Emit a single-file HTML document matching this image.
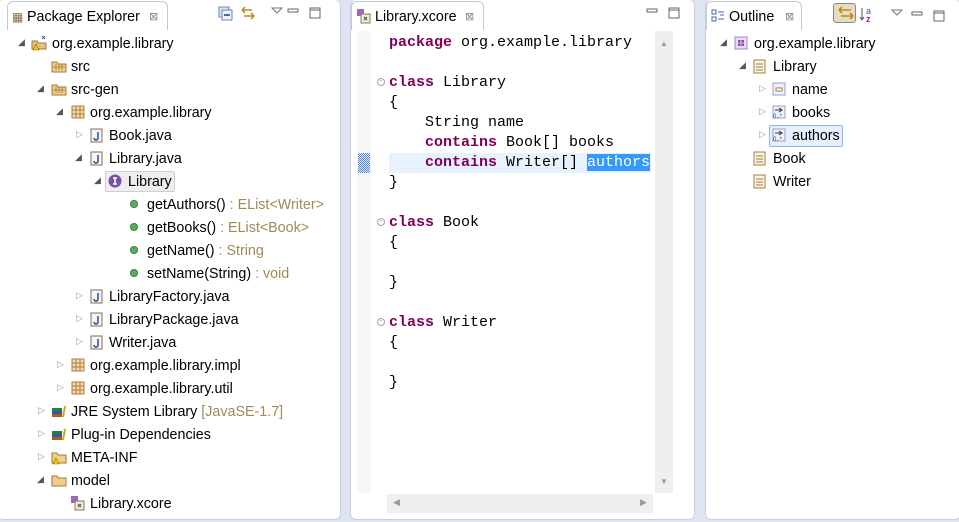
<!DOCTYPE html>
<html><head><meta charset="utf-8"><style>
*{margin:0;padding:0;box-sizing:border-box}
body{width:959px;height:522px;background:#dfe4f3;position:relative;overflow:hidden;font-family:"Liberation Sans","DejaVu Sans",sans-serif;font-size:14px;color:#000}
.panel{position:absolute;background:#fff;border:1px solid #c9cfe0;border-radius:6px}
.tab{position:absolute;background:#fff;border:1px solid #c2c9da;border-bottom:none;border-radius:6px 6px 0 0;height:29px;top:1px;font-size:14.3px;line-height:30px}
.r{position:absolute;height:23px;line-height:23px;white-space:nowrap;margin-top:1px;font-size:14.3px}
.ar{position:absolute;font-size:9px;color:#555}
.ico{position:absolute;width:14px;height:14px}
.g{color:#a08a5a}
.mono{font-family:"Liberation Mono","DejaVu Sans Mono",monospace;font-size:15px;position:absolute;white-space:pre;line-height:20px}
.k{color:#7f0055;font-weight:bold}
.x{position:absolute;font-size:11px;color:#888}
</style></head><body>

<!-- LEFT PANEL -->
<div class="panel" style="left:-2px;top:0;width:343px;height:520px;border-top:none;border-left:none"></div>
<div class="tab" style="left:7px;width:161px"><span style="position:absolute;left:4px;top:0;color:#8a6d3b;font-size:12px">&#9638;</span><span style="position:absolute;left:19px">Package Explorer</span><span class="x" style="left:141px;top:0">&#8864;</span></div>
<div style="position:absolute;left:168px;top:30px;width:172px;height:1px;background:#fff"></div>
<svg style="position:absolute;left:218px;top:5px" width="110" height="16">
<rect x="1" y="2" width="10" height="10" fill="#dde6f5" stroke="#6a85b0"/><rect x="4" y="5" width="10" height="10" fill="#eef3fb" stroke="#6a85b0"/><line x1="6" y1="10" x2="12" y2="10" stroke="#1a3c7a" stroke-width="1.5"/>
<path d="M24 5h10M24 5l3-3M24 5l3 3M36 11H26M36 11l-3-3M36 11l-3 3" stroke="#c08a10" stroke-width="1.5" fill="none"/>
<path d="M54 3l5 5 5-5z" fill="#fff" stroke="#777"/>
<rect x="70" y="4" width="10" height="3" fill="#fff" stroke="#666"/>
<rect x="92" y="3" width="10" height="10" fill="#fff" stroke="#666"/><line x1="92" y1="5" x2="102" y2="5" stroke="#666"/>
</svg>

<!-- tree -->
<div class="ar" style="left:18px;top:37px">&#9698;</div>
<svg class="ico" style="left:30px;top:35px;width:18px;height:16px" width="18" height="16"><path d="M2 6h5l1 2h8v6H2z" fill="#e8c27a" stroke="#9a7a3a"/><path d="M12 1l3 3M15 1l-3 3" stroke="#3a6ab0"/><path d="M3 15l3-6 3 6z" fill="#f5d000" stroke="#8a6000" stroke-width=".6"/></svg>
<div class="r" style="left:52px;top:32px">org.example.library</div>

<svg class="ico" style="left:51px;top:59px;width:16px" width="16" height="14"><path d="M1 3h5l1 2h8v8H1z" fill="#f0cf8a" stroke="#a07a30"/><path d="M5 5v6M8 5v6M11 5v6M2 8h12" stroke="#a07a30" stroke-width=".8"/></svg>
<div class="r" style="left:71px;top:55px">src</div>

<div class="ar" style="left:37px;top:83px">&#9698;</div>
<svg class="ico" style="left:51px;top:82px;width:16px" width="16" height="14"><path d="M1 3h5l1 2h8v8H1z" fill="#f0cf8a" stroke="#a07a30"/><path d="M5 5v6M8 5v6M11 5v6M2 8h12" stroke="#a07a30" stroke-width=".8"/></svg>
<div class="r" style="left:71px;top:78px">src-gen</div>

<div class="ar" style="left:56px;top:106px">&#9698;</div>
<svg class="ico" style="left:71px;top:105px" width="14" height="14"><rect x="1" y="1" width="12" height="12" fill="#f3d9b0" stroke="#b07a40"/><path d="M5 1v12M9 1v12M1 5h12M1 9h12" stroke="#b07a40"/></svg>
<div class="r" style="left:90px;top:101px">org.example.library</div>

<div class="ar" style="left:76px;top:129px;color:#999">&#9655;</div>
<svg class="ico" style="left:90px;top:128px;height:15px" width="14" height="15"><rect x="1" y="1" width="11" height="13" fill="#f2f5fb" stroke="#8a7040"/><path d="M8 4v6a2 2 0 0 1-4 0" stroke="#2a4e90" stroke-width="1.5" fill="none"/></svg>
<div class="r" style="left:109px;top:124px">Book.java</div>

<div class="ar" style="left:75px;top:152px">&#9698;</div>
<svg class="ico" style="left:90px;top:151px;height:15px" width="14" height="15"><rect x="1" y="1" width="11" height="13" fill="#f2f5fb" stroke="#8a7040"/><path d="M8 4v6a2 2 0 0 1-4 0" stroke="#2a4e90" stroke-width="1.5" fill="none"/></svg>
<div class="r" style="left:109px;top:147px">Library.java</div>

<div class="ar" style="left:94px;top:175px">&#9698;</div>
<div style="position:absolute;left:105px;top:171px;width:70px;height:21px;background:#eeeeee;border:1px solid #cfcfcf;border-radius:2px"></div>
<svg class="ico" style="left:108px;top:174px" width="14" height="14"><circle cx="7" cy="7" r="6.5" fill="#7a4fa8"/><path d="M5 4h4M5 10h4M7 4v6" stroke="#fff" stroke-width="1.6"/></svg>
<div class="r" style="left:128px;top:170px">Library</div>

<div style="position:absolute;left:130px;top:200px;width:8px;height:8px;border-radius:50%;background:#5fa86a;box-shadow:inset 0 0 0 1px #3e8a4a"></div>
<div class="r" style="left:147px;top:193px">getAuthors() <span class="g">: EList&lt;Writer&gt;</span></div>
<div style="position:absolute;left:130px;top:223px;width:8px;height:8px;border-radius:50%;background:#5fa86a;box-shadow:inset 0 0 0 1px #3e8a4a"></div>
<div class="r" style="left:147px;top:216px">getBooks() <span class="g">: EList&lt;Book&gt;</span></div>
<div style="position:absolute;left:130px;top:246px;width:8px;height:8px;border-radius:50%;background:#5fa86a;box-shadow:inset 0 0 0 1px #3e8a4a"></div>
<div class="r" style="left:147px;top:239px">getName() <span class="g">: String</span></div>
<div style="position:absolute;left:130px;top:269px;width:8px;height:8px;border-radius:50%;background:#5fa86a;box-shadow:inset 0 0 0 1px #3e8a4a"></div>
<div class="r" style="left:147px;top:262px">setName(String) <span class="g">: void</span></div>

<div class="ar" style="left:76px;top:290px;color:#999">&#9655;</div>
<svg class="ico" style="left:90px;top:289px;height:15px" width="14" height="15"><rect x="1" y="1" width="11" height="13" fill="#f2f5fb" stroke="#8a7040"/><path d="M8 4v6a2 2 0 0 1-4 0" stroke="#2a4e90" stroke-width="1.5" fill="none"/></svg>
<div class="r" style="left:109px;top:285px">LibraryFactory.java</div>
<div class="ar" style="left:76px;top:313px;color:#999">&#9655;</div>
<svg class="ico" style="left:90px;top:312px;height:15px" width="14" height="15"><rect x="1" y="1" width="11" height="13" fill="#f2f5fb" stroke="#8a7040"/><path d="M8 4v6a2 2 0 0 1-4 0" stroke="#2a4e90" stroke-width="1.5" fill="none"/></svg>
<div class="r" style="left:109px;top:308px">LibraryPackage.java</div>
<div class="ar" style="left:76px;top:336px;color:#999">&#9655;</div>
<svg class="ico" style="left:90px;top:335px;height:15px" width="14" height="15"><rect x="1" y="1" width="11" height="13" fill="#f2f5fb" stroke="#8a7040"/><path d="M8 4v6a2 2 0 0 1-4 0" stroke="#2a4e90" stroke-width="1.5" fill="none"/></svg>
<div class="r" style="left:109px;top:331px">Writer.java</div>

<div class="ar" style="left:57px;top:359px;color:#999">&#9655;</div>
<svg class="ico" style="left:71px;top:358px" width="14" height="14"><rect x="1" y="1" width="12" height="12" fill="#f3d9b0" stroke="#b07a40"/><path d="M5 1v12M9 1v12M1 5h12M1 9h12" stroke="#b07a40"/></svg>
<div class="r" style="left:90px;top:354px">org.example.library.impl</div>
<div class="ar" style="left:57px;top:382px;color:#999">&#9655;</div>
<svg class="ico" style="left:71px;top:381px" width="14" height="14"><rect x="1" y="1" width="12" height="12" fill="#f3d9b0" stroke="#b07a40"/><path d="M5 1v12M9 1v12M1 5h12M1 9h12" stroke="#b07a40"/></svg>
<div class="r" style="left:90px;top:377px">org.example.library.util</div>

<div class="ar" style="left:38px;top:405px;color:#999">&#9655;</div>
<svg class="ico" style="left:51px;top:404px;width:16px" width="16" height="14"><rect x="1" y="4" width="10" height="3" fill="#2f7a3a"/><rect x="1" y="7" width="10" height="3" fill="#2a5aa0"/><rect x="1" y="10" width="10" height="3" fill="#b05a20"/><path d="M12 13l2-11" stroke="#d8a020" stroke-width="2"/></svg>
<div class="r" style="left:71px;top:400px">JRE System Library <span class="g">[JavaSE-1.7]</span></div>
<div class="ar" style="left:38px;top:428px;color:#999">&#9655;</div>
<svg class="ico" style="left:51px;top:427px;width:16px" width="16" height="14"><rect x="1" y="4" width="10" height="3" fill="#2f7a3a"/><rect x="1" y="7" width="10" height="3" fill="#2a5aa0"/><rect x="1" y="10" width="10" height="3" fill="#b05a20"/><path d="M12 13l2-11" stroke="#d8a020" stroke-width="2"/></svg>
<div class="r" style="left:71px;top:423px">Plug-in Dependencies</div>
<div class="ar" style="left:38px;top:451px;color:#999">&#9655;</div>
<svg class="ico" style="left:51px;top:450px;width:16px;height:15px" width="16" height="15"><path d="M1 3h5l1 2h8v8H1z" fill="#f0cf8a" stroke="#a07a30"/><path d="M2 14l3-6 3 6z" fill="#f5d000" stroke="#8a6000" stroke-width=".6"/></svg>
<div class="r" style="left:71px;top:446px">META-INF</div>
<div class="ar" style="left:37px;top:474px">&#9698;</div>
<svg class="ico" style="left:51px;top:473px;width:16px" width="16" height="14"><path d="M1 3h5l1 2h8v8H1z" fill="#f0cf8a" stroke="#a07a30"/></svg>
<div class="r" style="left:71px;top:469px">model</div>
<svg class="ico" style="left:70px;top:495px;width:16px;height:16px" width="16" height="16"><rect x="1" y="1" width="7" height="7" fill="#9a6ac0"/><rect x="5" y="6" width="9" height="9" fill="#f0ead0" stroke="#8a7a50"/><path d="M8 9l3 3M11 9l-3 3" stroke="#2a4e90"/></svg>
<div class="r" style="left:90px;top:492px">Library.xcore</div>

<!-- MIDDLE PANEL -->
<div class="panel" style="left:350px;top:0;width:345px;height:520px;border-top:none"></div>
<div class="tab" style="left:351px;width:133px"><svg style="position:absolute;left:4px;top:6px" width="16" height="16"><rect x="1" y="1" width="7" height="7" fill="#9a6ac0"/><rect x="5" y="6" width="9" height="9" fill="#f0ead0" stroke="#8a7a50"/><path d="M8 9l3 3M11 9l-3 3" stroke="#2a4e90"/></svg><span style="position:absolute;left:23px">Library.xcore</span><span class="x" style="left:113px;top:0">&#8864;</span></div>
<svg style="position:absolute;left:645px;top:5px" width="45" height="16"><rect x="2" y="4" width="10" height="3" fill="#fff" stroke="#666"/><rect x="24" y="3" width="10" height="10" fill="#fff" stroke="#666"/><line x1="24" y1="5" x2="34" y2="5" stroke="#666"/></svg>
<div style="position:absolute;left:369px;top:31px;width:2px;height:462px;background:#f6f6f6"></div>
<div style="position:absolute;left:357px;top:31px;width:12px;height:462px;background:#f7f7f7"></div>
<div style="position:absolute;left:389px;top:153px;width:262px;height:20px;background:#e8f2fe"></div>
<div style="position:absolute;left:358px;top:153px;width:12px;height:20px;background:repeating-conic-gradient(#5a8ad0 0 25%,#dbe6f8 0 50%) 0 0/2px 2px"></div>
<div style="position:absolute;left:655px;top:31px;width:18px;height:462px;background:#efefef"></div>
<div style="position:absolute;left:660px;top:39px;font-size:8px;color:#999">&#9650;</div>
<div style="position:absolute;left:660px;top:477px;font-size:8px;color:#999">&#9660;</div>
<div style="position:absolute;left:387px;top:494px;width:266px;height:19px;background:#efefef"></div>
<div style="position:absolute;left:393px;top:497px;font-size:9px;color:#999">&#9664;</div>
<div style="position:absolute;left:640px;top:497px;font-size:9px;color:#999">&#9654;</div>
<div style="position:absolute;left:377px;top:78px;width:8px;height:8px;border:1px solid #9aa;border-radius:50%;font-size:7px;line-height:6px;text-align:center;color:#667">-</div>
<div style="position:absolute;left:377px;top:218px;width:8px;height:8px;border:1px solid #9aa;border-radius:50%;font-size:7px;line-height:6px;text-align:center;color:#667">-</div>
<div style="position:absolute;left:377px;top:318px;width:8px;height:8px;border:1px solid #9aa;border-radius:50%;font-size:7px;line-height:6px;text-align:center;color:#667">-</div>
<div class="mono" style="left:389px;top:33px"><span class="k">package</span> org.example.library

<span class="k">class</span> Library
{
    String name
    <span class="k">contains</span> Book[] books
    <span class="k">contains</span> Writer[] <span style="background:#3399ff;color:#fff">authors</span>
}

<span class="k">class</span> Book
{

}

<span class="k">class</span> Writer
{

}</div>

<!-- RIGHT PANEL -->
<div class="panel" style="left:705px;top:0;width:256px;height:520px;border-top:none"></div>
<div class="tab" style="left:706px;width:96px"><svg style="position:absolute;left:4px;top:7px" width="14" height="14"><rect x="1" y="1" width="4" height="4" fill="#fff" stroke="#3a6ab0"/><rect x="1" y="8" width="4" height="4" fill="#fff" stroke="#3a6ab0"/><path d="M7 3h6M7 10h6M9 6h4" stroke="#3a6ab0"/></svg><span style="position:absolute;left:22px">Outline</span><span class="x" style="left:78px;top:0">&#8864;</span></div>
<div style="position:absolute;left:833px;top:3px;width:23px;height:20px;background:#e6dcc0;border:1px solid #888;border-radius:3px"></div>
<svg style="position:absolute;left:836px;top:5px" width="120" height="18"><path d="M3 5h12M3 5l3-3M3 5l3 3M17 11H5M17 11l-3-3M17 11l-3 3" stroke="#c08a10" stroke-width="1.6" fill="none"/>
<path d="M26 3v11M24 12l2 3 2-3" stroke="#555" fill="none"/><text x="30" y="9" font-size="9" fill="#2a5aa0" font-family="Liberation Sans">a</text><text x="30" y="17" font-size="9" fill="#8a2a8a" font-weight="bold" font-family="Liberation Sans">z</text>
<path d="M56 5l5 5 5-5z" fill="#fff" stroke="#777"/><rect x="76" y="7" width="10" height="3" fill="#fff" stroke="#666"/><rect x="98" y="6" width="10" height="10" fill="#fff" stroke="#666"/><line x1="98" y1="8" x2="108" y2="8" stroke="#666"/></svg>

<div class="ar" style="left:720px;top:37px">&#9698;</div>
<svg class="ico" style="left:734px;top:36px;width:15px;height:15px" width="15" height="15"><rect x="1" y="1" width="12" height="12" fill="#eadcf2" stroke="#9a8ac0"/><rect x="4" y="4" width="6" height="6" fill="#9a4ab0"/><path d="M7 3v8M3 7h8" stroke="#d8b8e0"/></svg>
<div class="r" style="left:754px;top:32px">org.example.library</div>
<div class="ar" style="left:739px;top:60px">&#9698;</div>
<svg class="ico" style="left:753px;top:59px;height:15px" width="14" height="15"><rect x="1" y="1" width="11" height="13" fill="#fcf5e4" stroke="#a08040"/><path d="M3 5h7M3 8h7M3 11h7" stroke="#a08040"/></svg>
<div class="r" style="left:773px;top:55px">Library</div>
<div class="ar" style="left:759px;top:83px;color:#999">&#9655;</div>
<svg class="ico" style="left:772px;top:82px" width="14" height="14"><rect x="1" y="1" width="12" height="12" fill="#eef0fa" stroke="#9aa0c8"/><rect x="4" y="6" width="6" height="3" fill="#fff" stroke="#a08040"/></svg>
<div class="r" style="left:792px;top:78px">name</div>
<div class="ar" style="left:759px;top:106px;color:#999">&#9655;</div>
<svg class="ico" style="left:772px;top:105px;width:16px;height:15px" width="16" height="15"><rect x="1" y="1" width="12" height="12" fill="#eef0fa" stroke="#9aa0c8"/><path d="M3 5h6M7 3l3 2-3 2" stroke="#333" fill="none"/><text x="1" y="13" font-size="6" fill="#2a4e90" font-family="Liberation Sans">0..*</text></svg>
<div class="r" style="left:792px;top:101px">books</div>
<div class="ar" style="left:759px;top:129px;color:#999">&#9655;</div>
<div style="position:absolute;left:769px;top:125px;width:74px;height:22px;background:#e5f0fc;border:1px solid #8fb5e5;border-radius:2px"></div>
<svg class="ico" style="left:772px;top:128px;width:16px;height:15px" width="16" height="15"><rect x="1" y="1" width="12" height="12" fill="#eef0fa" stroke="#9aa0c8"/><path d="M3 5h6M7 3l3 2-3 2" stroke="#333" fill="none"/><text x="1" y="13" font-size="6" fill="#2a4e90" font-family="Liberation Sans">0..*</text></svg>
<div class="r" style="left:792px;top:124px">authors</div>
<svg class="ico" style="left:753px;top:151px;height:15px" width="14" height="15"><rect x="1" y="1" width="11" height="13" fill="#fcf5e4" stroke="#a08040"/><path d="M3 5h7M3 8h7M3 11h7" stroke="#a08040"/></svg>
<div class="r" style="left:773px;top:147px">Book</div>
<svg class="ico" style="left:753px;top:174px;height:15px" width="14" height="15"><rect x="1" y="1" width="11" height="13" fill="#fcf5e4" stroke="#a08040"/><path d="M3 5h7M3 8h7M3 11h7" stroke="#a08040"/></svg>
<div class="r" style="left:773px;top:170px">Writer</div>
</body></html>
